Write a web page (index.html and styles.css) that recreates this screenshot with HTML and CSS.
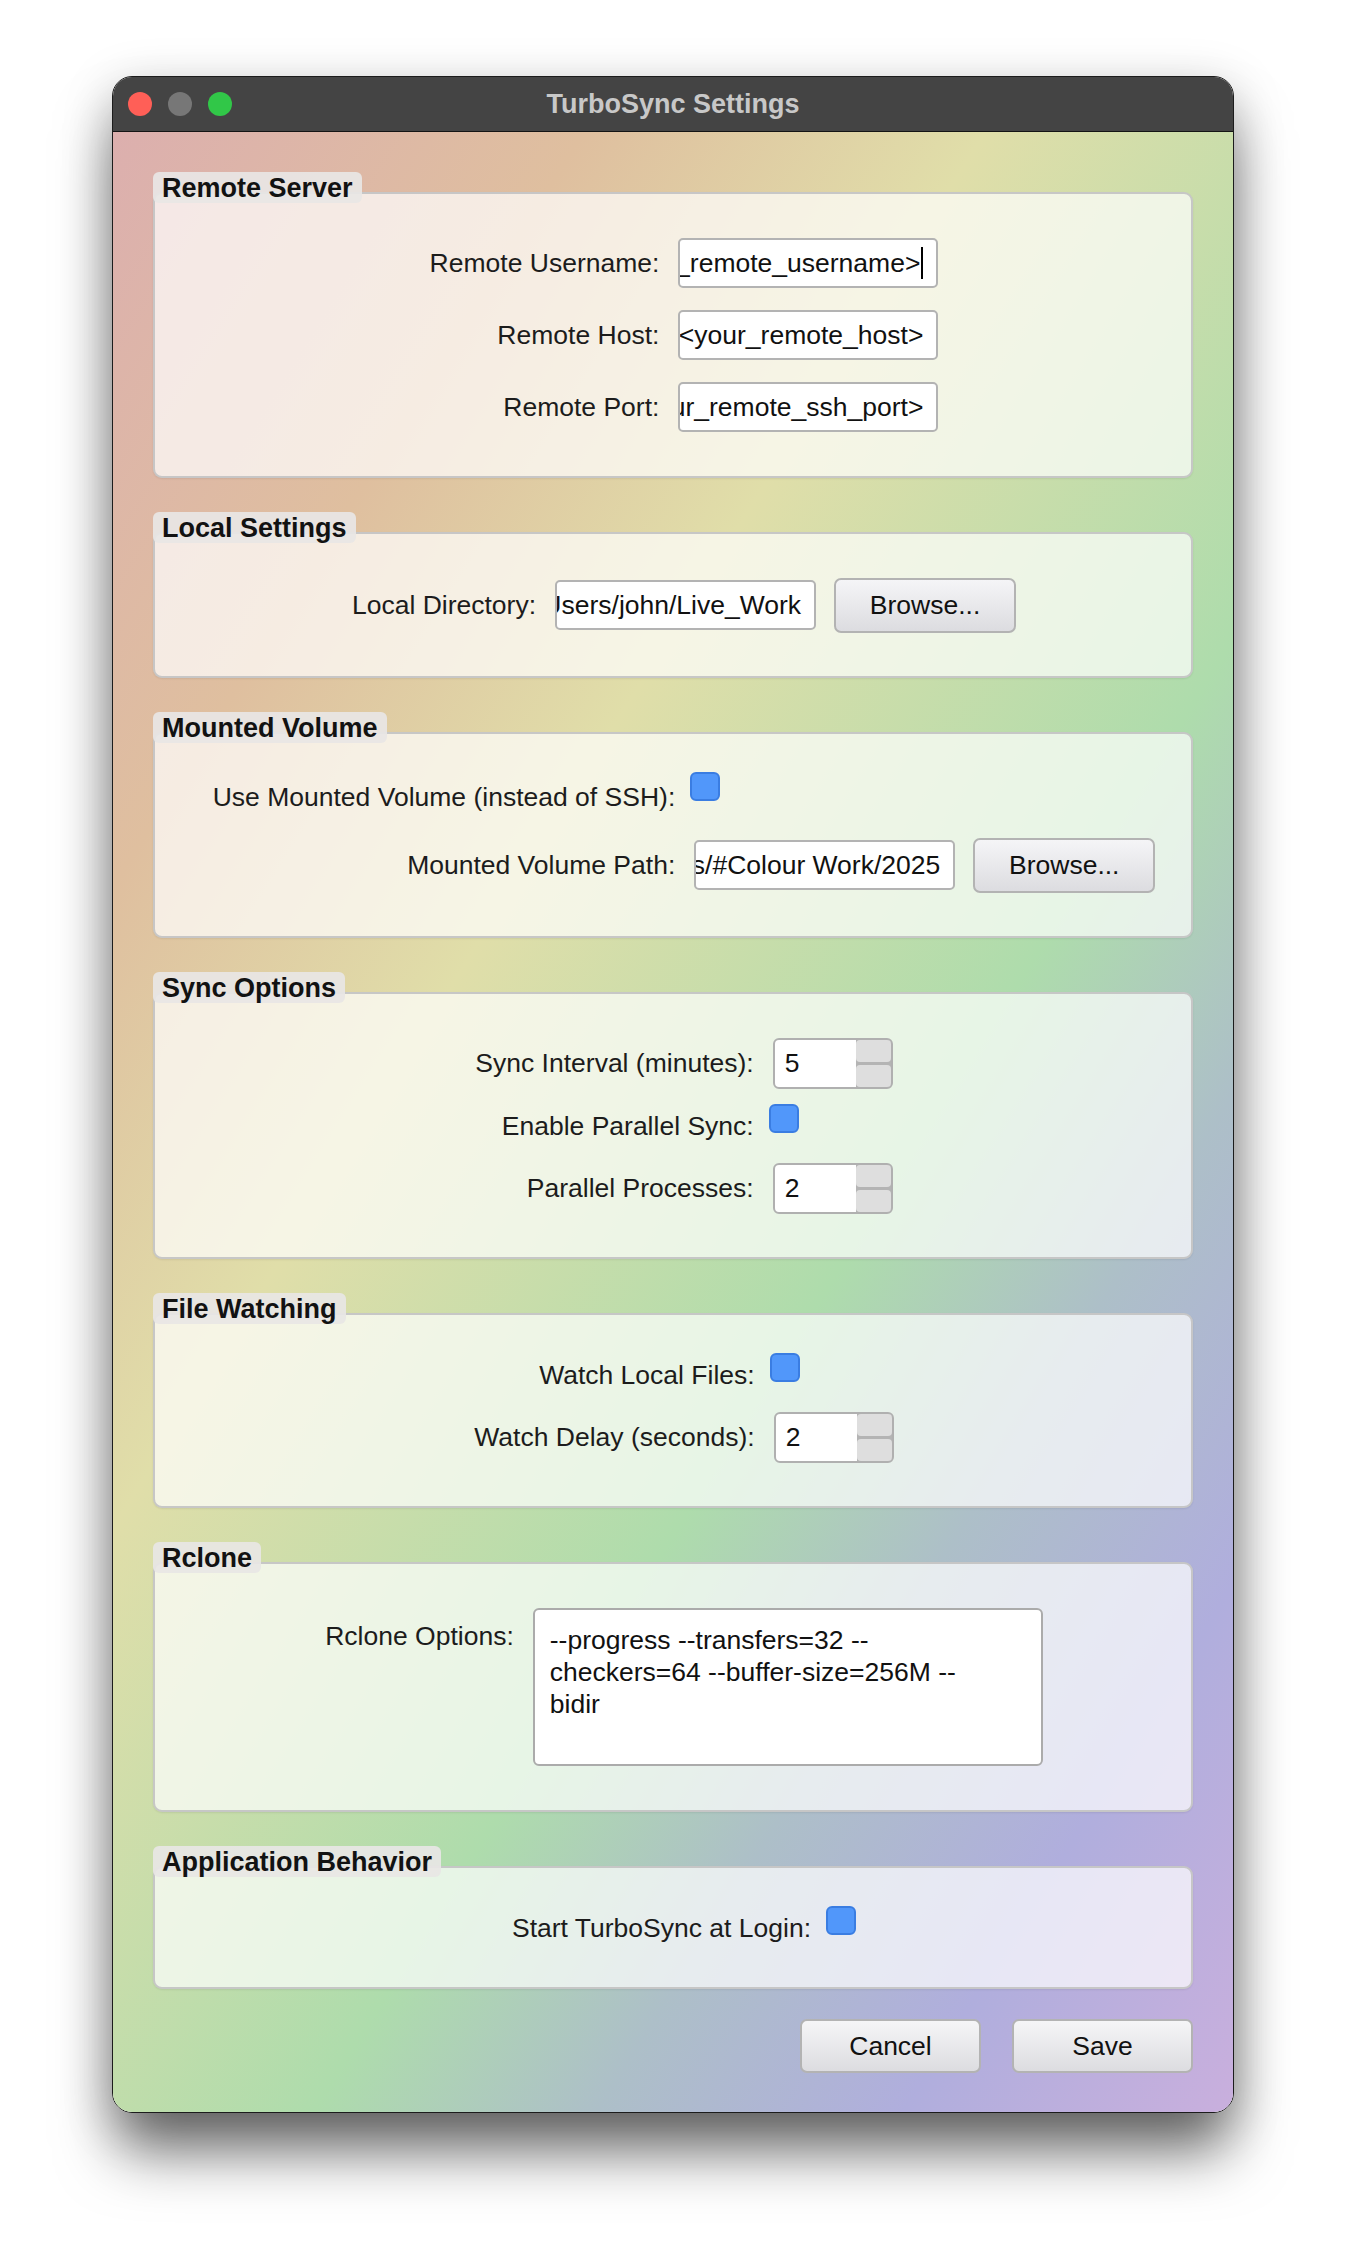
FILE: index.html
```html
<!DOCTYPE html>
<html lang="en">
<head>
<meta charset="utf-8">
<title>TurboSync Settings</title>
<link rel="stylesheet" href="styles.css">
</head>
<body>
<div class="window">
  <header class="titlebar">
    <div class="lights">
      <span class="light close"></span>
      <span class="light min"></span>
      <span class="light max"></span>
    </div>
    <div class="title">TurboSync Settings</div>
    <div></div>
  </header>

  <main class="content">
    <section class="group">
      <div class="group-title">Remote Server</div>
      <div class="group-box">
        <div class="form">
          <div class="lbl">Remote Username:</div>
          <div class="cell h62"><div class="input w260"><span class="val">&lt;your_remote_username&gt;</span><span class="caret"></span></div></div>
          <div class="lbl">Remote Host:</div>
          <div class="cell h62"><div class="input w260"><span class="val">&lt;your_remote_host&gt;</span></div></div>
          <div class="lbl">Remote Port:</div>
          <div class="cell h62"><div class="input w260"><span class="val">&lt;your_remote_ssh_port&gt;</span></div></div>
        </div>
      </div>
    </section>

    <section class="group">
      <div class="group-title">Local Settings</div>
      <div class="group-box">
        <div class="form">
          <div class="lbl">Local Directory:</div>
          <div class="cell h66"><div class="input w261"><span class="val">/Users/john/Live_Work</span></div><button class="btn browse">Browse...</button></div>
        </div>
      </div>
    </section>

    <section class="group">
      <div class="group-title">Mounted Volume</div>
      <div class="group-box">
        <div class="form">
          <div class="lbl">Use Mounted Volume (instead of SSH):</div>
          <div class="cell h50 top"><span class="check"></span></div>
          <div class="lbl">Mounted Volume Path:</div>
          <div class="cell h66"><div class="input w261"><span class="val">/Volumes/Projects/#Colour Work/2025</span></div><button class="btn browse">Browse...</button></div>
        </div>
      </div>
    </section>

    <section class="group">
      <div class="group-title">Sync Options</div>
      <div class="group-box">
        <div class="form">
          <div class="lbl">Sync Interval (minutes):</div>
          <div class="cell h62"><div class="spin"><span class="spin-val">5</span><span class="spin-btns"><span></span><span></span></span></div></div>
          <div class="lbl">Enable Parallel Sync:</div>
          <div class="cell h43 top"><span class="check"></span></div>
          <div class="lbl">Parallel Processes:</div>
          <div class="cell h62"><div class="spin"><span class="spin-val">2</span><span class="spin-btns"><span></span><span></span></span></div></div>
        </div>
      </div>
    </section>

    <section class="group">
      <div class="group-title">File Watching</div>
      <div class="group-box">
        <div class="form">
          <div class="lbl">Watch Local Files:</div>
          <div class="cell h43 top"><span class="check"></span></div>
          <div class="lbl">Watch Delay (seconds):</div>
          <div class="cell h62"><div class="spin"><span class="spin-val">2</span><span class="spin-btns"><span></span><span></span></span></div></div>
        </div>
      </div>
    </section>

    <section class="group">
      <div class="group-title">Rclone</div>
      <div class="group-box">
        <div class="form">
          <div class="lbl lbl-top">Rclone Options:</div>
          <div class="cell h170"><div class="textarea">--progress --transfers=32 --<br>checkers=64 --buffer-size=256M --<br>bidir</div></div>
        </div>
      </div>
    </section>

    <section class="group">
      <div class="group-title">Application Behavior</div>
      <div class="group-box">
        <div class="form">
          <div class="lbl">Start TurboSync at Login:</div>
          <div class="cell h43 top"><span class="check"></span></div>
        </div>
      </div>
    </section>

    <div class="actions">
      <button class="btn action">Cancel</button>
      <button class="btn action">Save</button>
    </div>
  </main>
</div>
</body>
</html>
```

FILE: styles.css
```css
* {
  box-sizing: border-box;
}

html,
body {
  margin: 0;
  background: #ffffff;
}

body {
  padding: 76px 0 148px;
  font-family: "Liberation Sans", Arial, sans-serif;
  font-size: 26.5px;
  color: #1c1c1c;
}

.window {
  width: 1122px;
  margin: 0 auto;
  border: 1px solid #1c1c1c;
  border-radius: 20px;
  overflow: hidden;
  box-shadow:
    0 44px 60px -6px rgba(0, 0, 0, 0.55),
    0 12px 50px rgba(0, 0, 0, 0.22);
}

/* ---------- title bar ---------- */
.titlebar {
  height: 55px;
  background: #444444;
  border-bottom: 1px solid #141414;
  display: grid;
  grid-template-columns: 1fr auto 1fr;
  align-items: center;
}

.lights {
  display: flex;
  gap: 16px;
  padding-left: 15px;
}

.light {
  width: 24px;
  height: 24px;
  border-radius: 50%;
}

.light.close { background: #ff5f57; }
.light.min   { background: #777777; }
.light.max   { background: #31c748; }

.title {
  font-weight: bold;
  font-size: 27px;
  color: #c8c8c8;
}

/* ---------- content ---------- */
.content {
  padding: 40px 40px 39px;
  display: flex;
  flex-direction: column;
  gap: 34px;
  background: linear-gradient(122deg,
    #dcafae 0%,
    #dfbf9f 20%,
    #e0dea9 37%,
    #aedcac 61%,
    #adbfc8 73%,
    #b0aedd 86%,
    #c9afdd 100%);
}

.group {
  display: flex;
  flex-direction: column;
  align-items: flex-start;
}

.group-title {
  position: relative;
  z-index: 1;
  height: 31px;
  line-height: 33px;
  padding: 0 9px;
  font-weight: bold;
  font-size: 27px;
  color: #121212;
  background: rgba(232, 230, 229, 0.92);
  border-radius: 6px;
}

.group-box {
  align-self: stretch;
  margin-top: -11px;
  padding: 38px 18px 38px 40px;
  border: 2px solid rgba(196, 196, 196, 0.95);
  border-radius: 9px;
  background: rgba(255, 255, 255, 0.7);
  box-shadow: 0 1px 2px rgba(0, 0, 0, 0.08);
}

.form {
  display: grid;
  grid-template-columns: auto auto;
  justify-content: center;
  column-gap: 19px;
  row-gap: 10px;
}

.lbl {
  align-self: center;
  text-align: right;
  line-height: 32px;
  white-space: nowrap;
}

.lbl-top {
  align-self: start;
  margin-top: 18px;
}

.cell {
  display: flex;
  align-items: center;
  gap: 18px;
}

.cell.top { align-items: flex-start; }

.h43 { height: 43px; }
.h50 { height: 50px; }
.h62 { height: 62px; }
.h66 { height: 66px; }
.h170 { height: 170px; }

/* ---------- controls ---------- */
.input {
  height: 50px;
  display: flex;
  align-items: center;
  justify-content: flex-end;
  overflow: hidden;
  white-space: nowrap;
  padding: 0 13px 0 4px;
  background: #ffffff;
  border: 2px solid #b3b3b3;
  border-radius: 5px;
  color: #111111;
}

.w260 { width: 260px; }
.w261 { width: 261px; }

.val {
  flex: none;
}

.caret {
  flex: none;
  width: 2px;
  height: 32px;
  margin-left: 1px;
  background: #000000;
}

.btn {
  font-family: inherit;
  font-size: 26.5px;
  color: #111111;
  background: linear-gradient(#f5f5f7, #dcdce0);
  border: 2px solid #b3b3b3;
  border-radius: 7px;
  padding: 0;
}

.browse {
  width: 182px;
  height: 55px;
}

.check {
  display: block;
  width: 30px;
  height: 29px;
  margin-left: -4px;
  background: #5197fa;
  border: 2px solid #3a7de2;
  border-radius: 6px;
}

.spin {
  width: 120px;
  height: 51px;
  display: flex;
  background: #ffffff;
  border: 2px solid #b0b0b0;
  border-radius: 6px;
  overflow: hidden;
}

.spin-val {
  flex: 1;
  display: flex;
  align-items: center;
  padding-left: 10px;
  color: #111111;
}

.spin-btns {
  width: 35px;
  display: flex;
  flex-direction: column;
  gap: 3px;
  background: #b4b4b4;
}

.spin-btns span {
  flex: 1;
  background: #dedede;
  border-radius: 4px;
}

.textarea {
  width: 510px;
  height: 158px;
  padding: 14px 12px 0 15px;
  line-height: 32px;
  background: #ffffff;
  border: 2px solid #ababab;
  border-radius: 6px;
  color: #111111;
}

.actions {
  display: flex;
  justify-content: flex-end;
  gap: 31px;
  margin-top: -4px;
}

.action {
  width: 181px;
  height: 54px;
}
```
